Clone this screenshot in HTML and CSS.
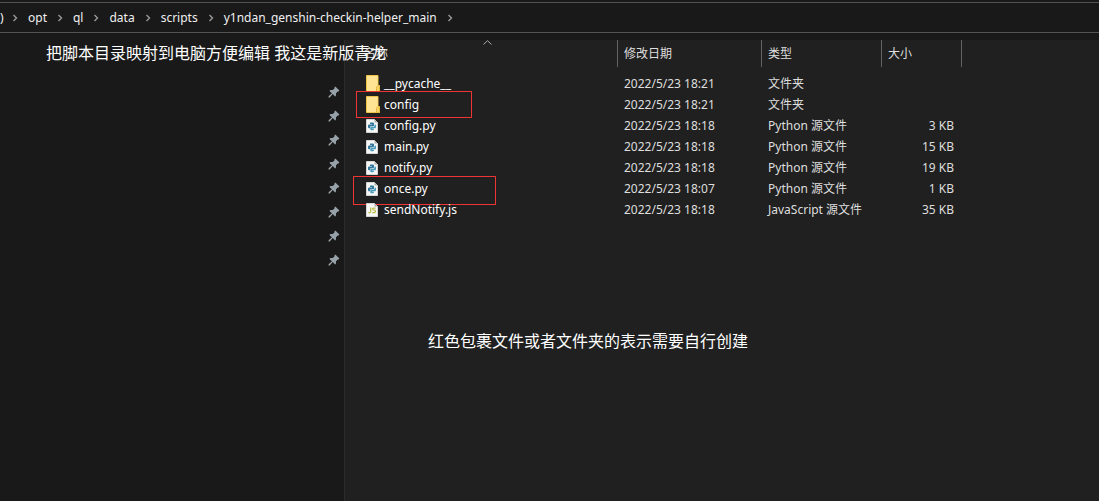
FILE: index.html
```html
<!DOCTYPE html>
<html lang="zh-CN">
<head>
<meta charset="utf-8">
<title>y1ndan_genshin-checkin-helper_main</title>
<link rel="stylesheet" href="styles.css">
</head>
<body>
<svg class="defs" aria-hidden="true">
  <symbol id="chev" viewBox="0 0 6 8"><path d="M1.5 1 4.5 4 1.5 7" fill="none" stroke="#999" stroke-width="1.4"/></symbol>
  <symbol id="pin" viewBox="0 0 12 12"><path d="M7.3.6 11.4 4.6 10.5 5.6 9.8 5.4 8 7.3 7.9 9.8 7.1 10.5 4.7 8.1 1.7 11.4.5 11.5.6 10.3 3.9 7.3 1.5 5 2.3 4.1 4.8 4 6.6 2.2 6.4 1.5Z" fill="#96a1a8"/></symbol>
  <symbol id="folder" viewBox="0 0 14 17"><path d="M.5.5H12V10.5H13.5V16.5H.5Z" fill="#ffe08a" stroke="#eec348"/><path d="M1 1H11.5V11L10.5 12V16H1Z" fill="#ffe494"/><path d="M10.5 16.5V12L12 10.5H13.5V16.5Z" fill="#f8d365" stroke="#e5b93e"/></symbol>
  <symbol id="page" viewBox="0 0 12 14"><path d="M.5.5H8.5L11.5 3.5V13.5H.5Z" fill="#f7f7f5" stroke="#d6d6d4"/><path d="M8.5.5V3.5H11.5Z" fill="#aaa"/></symbol>
  <symbol id="py" viewBox="0 0 12 14"><use href="#page"/><path d="M4 3.5H7.2L8 4.3V6.5L7.3 7.2H4.7L4 8V9.2H2.7L2 8.5V6.3L2.8 5.6H6V5H4Z" fill="#34779c"/><path d="M8.5 5.5H9.4L10 6.2V8.4L9.4 9.2H6.2V9.7H8V10.6L7.2 11.2H5L4.3 10.5V8.4L5 7.7H7.8L8.5 7Z" fill="#4b9dbd"/></symbol>
  <symbol id="js" viewBox="0 0 12 14"><use href="#page"/><path d="M4.7 4.5V8.4Q4.7 9.6 3.6 9.6H2.4M9.5 5.1H7.5Q6.6 5.1 6.6 6T7.6 7H8.4Q9.5 7 9.5 8.2T8.4 9.6H6.3" fill="none" stroke="#b9bd42" stroke-width="1.2"/></symbol>
</svg>

<nav class="crumbs" aria-label="路径">
  <span class="drive">)</span><svg class="chev"><use href="#chev"/></svg>
  <a href="#opt">opt</a><svg class="chev"><use href="#chev"/></svg>
  <a href="#ql">ql</a><svg class="chev"><use href="#chev"/></svg>
  <a href="#data">data</a><svg class="chev"><use href="#chev"/></svg>
  <a href="#scripts">scripts</a><svg class="chev"><use href="#chev"/></svg>
  <a href="#main">y1ndan_genshin-checkin-helper_main</a><svg class="chev"><use href="#chev"/></svg>
</nav>

<div class="explorer">
  <aside class="sidebar">
    <svg class="pin"><use href="#pin"/></svg>
    <svg class="pin"><use href="#pin"/></svg>
    <svg class="pin"><use href="#pin"/></svg>
    <svg class="pin"><use href="#pin"/></svg>
    <svg class="pin"><use href="#pin"/></svg>
    <svg class="pin"><use href="#pin"/></svg>
    <svg class="pin"><use href="#pin"/></svg>
    <svg class="pin"><use href="#pin"/></svg>
  </aside>
  <main class="content">
    <table class="files">
      <colgroup><col class="c-name"><col class="c-date"><col class="c-type"><col class="c-size"></colgroup>
      <thead>
        <tr><th>名称<svg class="sort" viewBox="0 0 9 5"><path d="M.5 4.5 4.5.7 8.5 4.5" fill="none" stroke="#aaa"/></svg></th><th>修改日期</th><th>类型</th><th>大小</th></tr>
      </thead>
      <tbody>
        <tr><td><div class="file"><svg class="folder"><use href="#folder"/></svg>__pycache__</div></td><td>2022/5/23 18:21</td><td>文件夹</td><td></td></tr>
        <tr><td><div class="file mark mark-folder"><svg class="folder"><use href="#folder"/></svg>config</div></td><td>2022/5/23 18:21</td><td>文件夹</td><td></td></tr>
        <tr><td><div class="file"><svg class="doc"><use href="#py"/></svg>config.py</div></td><td>2022/5/23 18:18</td><td>Python 源文件</td><td>3 KB</td></tr>
        <tr><td><div class="file"><svg class="doc"><use href="#py"/></svg>main.py</div></td><td>2022/5/23 18:18</td><td>Python 源文件</td><td>15 KB</td></tr>
        <tr><td><div class="file"><svg class="doc"><use href="#py"/></svg>notify.py</div></td><td>2022/5/23 18:18</td><td>Python 源文件</td><td>19 KB</td></tr>
        <tr><td><div class="file mark mark-script"><svg class="doc"><use href="#py"/></svg>once.py</div></td><td>2022/5/23 18:07</td><td>Python 源文件</td><td>1 KB</td></tr>
        <tr><td><div class="file"><svg class="doc"><use href="#js"/></svg>sendNotify.js</div></td><td>2022/5/23 18:18</td><td>JavaScript 源文件</td><td>35 KB</td></tr>
      </tbody>
    </table>
    <p class="note">红色包裹文件或者文件夹的表示需要自行创建</p>
  </main>
  <p class="note note-top">把脚本目录映射到电脑方便编辑 我这是新版青龙</p>
</div>
</body>
</html>
```

FILE: styles.css
```css
*, *::before, *::after { box-sizing: border-box; }

body {
  margin: 0;
  min-height: 100vh;
  display: flex;
  flex-direction: column;
  background: #191919;
  color: #dedede;
  font: 12px/21px "Noto Sans", "Noto Sans CJK SC", sans-serif;
}

.defs { position: absolute; width: 0; height: 0; }

.crumbs {
  display: flex;
  align-items: center;
  height: 31px;
  margin-top: 2px;
  border-top: 1px solid #535353;
  border-bottom: 1px solid #535353;
  color: #f0f0f0;
  white-space: nowrap;
}
.crumbs a { color: inherit; text-decoration: none; }
.drive { width: 12px; }
.chev { width: 6px; height: 8px; margin-right: 10px; flex: none; }
.crumbs a + .chev { margin-left: 10px; }

.explorer { flex: 1; display: flex; position: relative; padding-top: 7px; }

.sidebar {
  flex: none;
  width: 344px;
  padding: 46px 4px 0 0;
  display: flex;
  flex-direction: column;
  align-items: flex-end;
  gap: 12px;
}
.pin { width: 12px; height: 12px; }

.content {
  flex: 1;
  min-width: 0;
  background: #202020;
  border-left: 1px solid #2b2b2b;
}

.files { width: 617px; table-layout: fixed; border-collapse: separate; border-spacing: 0; }
.c-date { width: 144px; }
.c-type { width: 120px; }
.c-size { width: 80px; }
.files th {
  position: relative;
  height: 27px;
  padding: 0 6px;
  border-right: 1px solid #636363;
  font-weight: 400;
  text-align: left;
}
.files th:first-child { padding-left: 19px; }
.sort { position: absolute; top: 0; left: calc(50% + 2px); width: 9px; height: 5px; }
.files td { height: 21px; padding: 0 8px 0 6px; white-space: nowrap; }
.files td:first-child { padding-left: 21px; color: #fff; }
.files td:last-child { text-align: right; }
.files tbody::before { content: ""; display: block; height: 6px; }

.file { position: relative; display: flex; align-items: center; height: 21px; }
.folder { width: 14px; height: 17px; margin-right: 4px; }
.doc { width: 12px; height: 14px; margin-right: 6px; }
.mark::after { content: ""; position: absolute; border: 1px solid #ef3434; }
.mark-folder::after { left: -10px; top: -3px; width: 116px; height: 27px; }
.mark-script::after { left: -13px; top: -2px; width: 143px; height: 29px; }

.note { margin: 108px 0 0 83px; color: #fff; font-size: 16px; line-height: 26px; }
.note-top { position: absolute; top: 7px; left: 46px; margin: 0; }
```
